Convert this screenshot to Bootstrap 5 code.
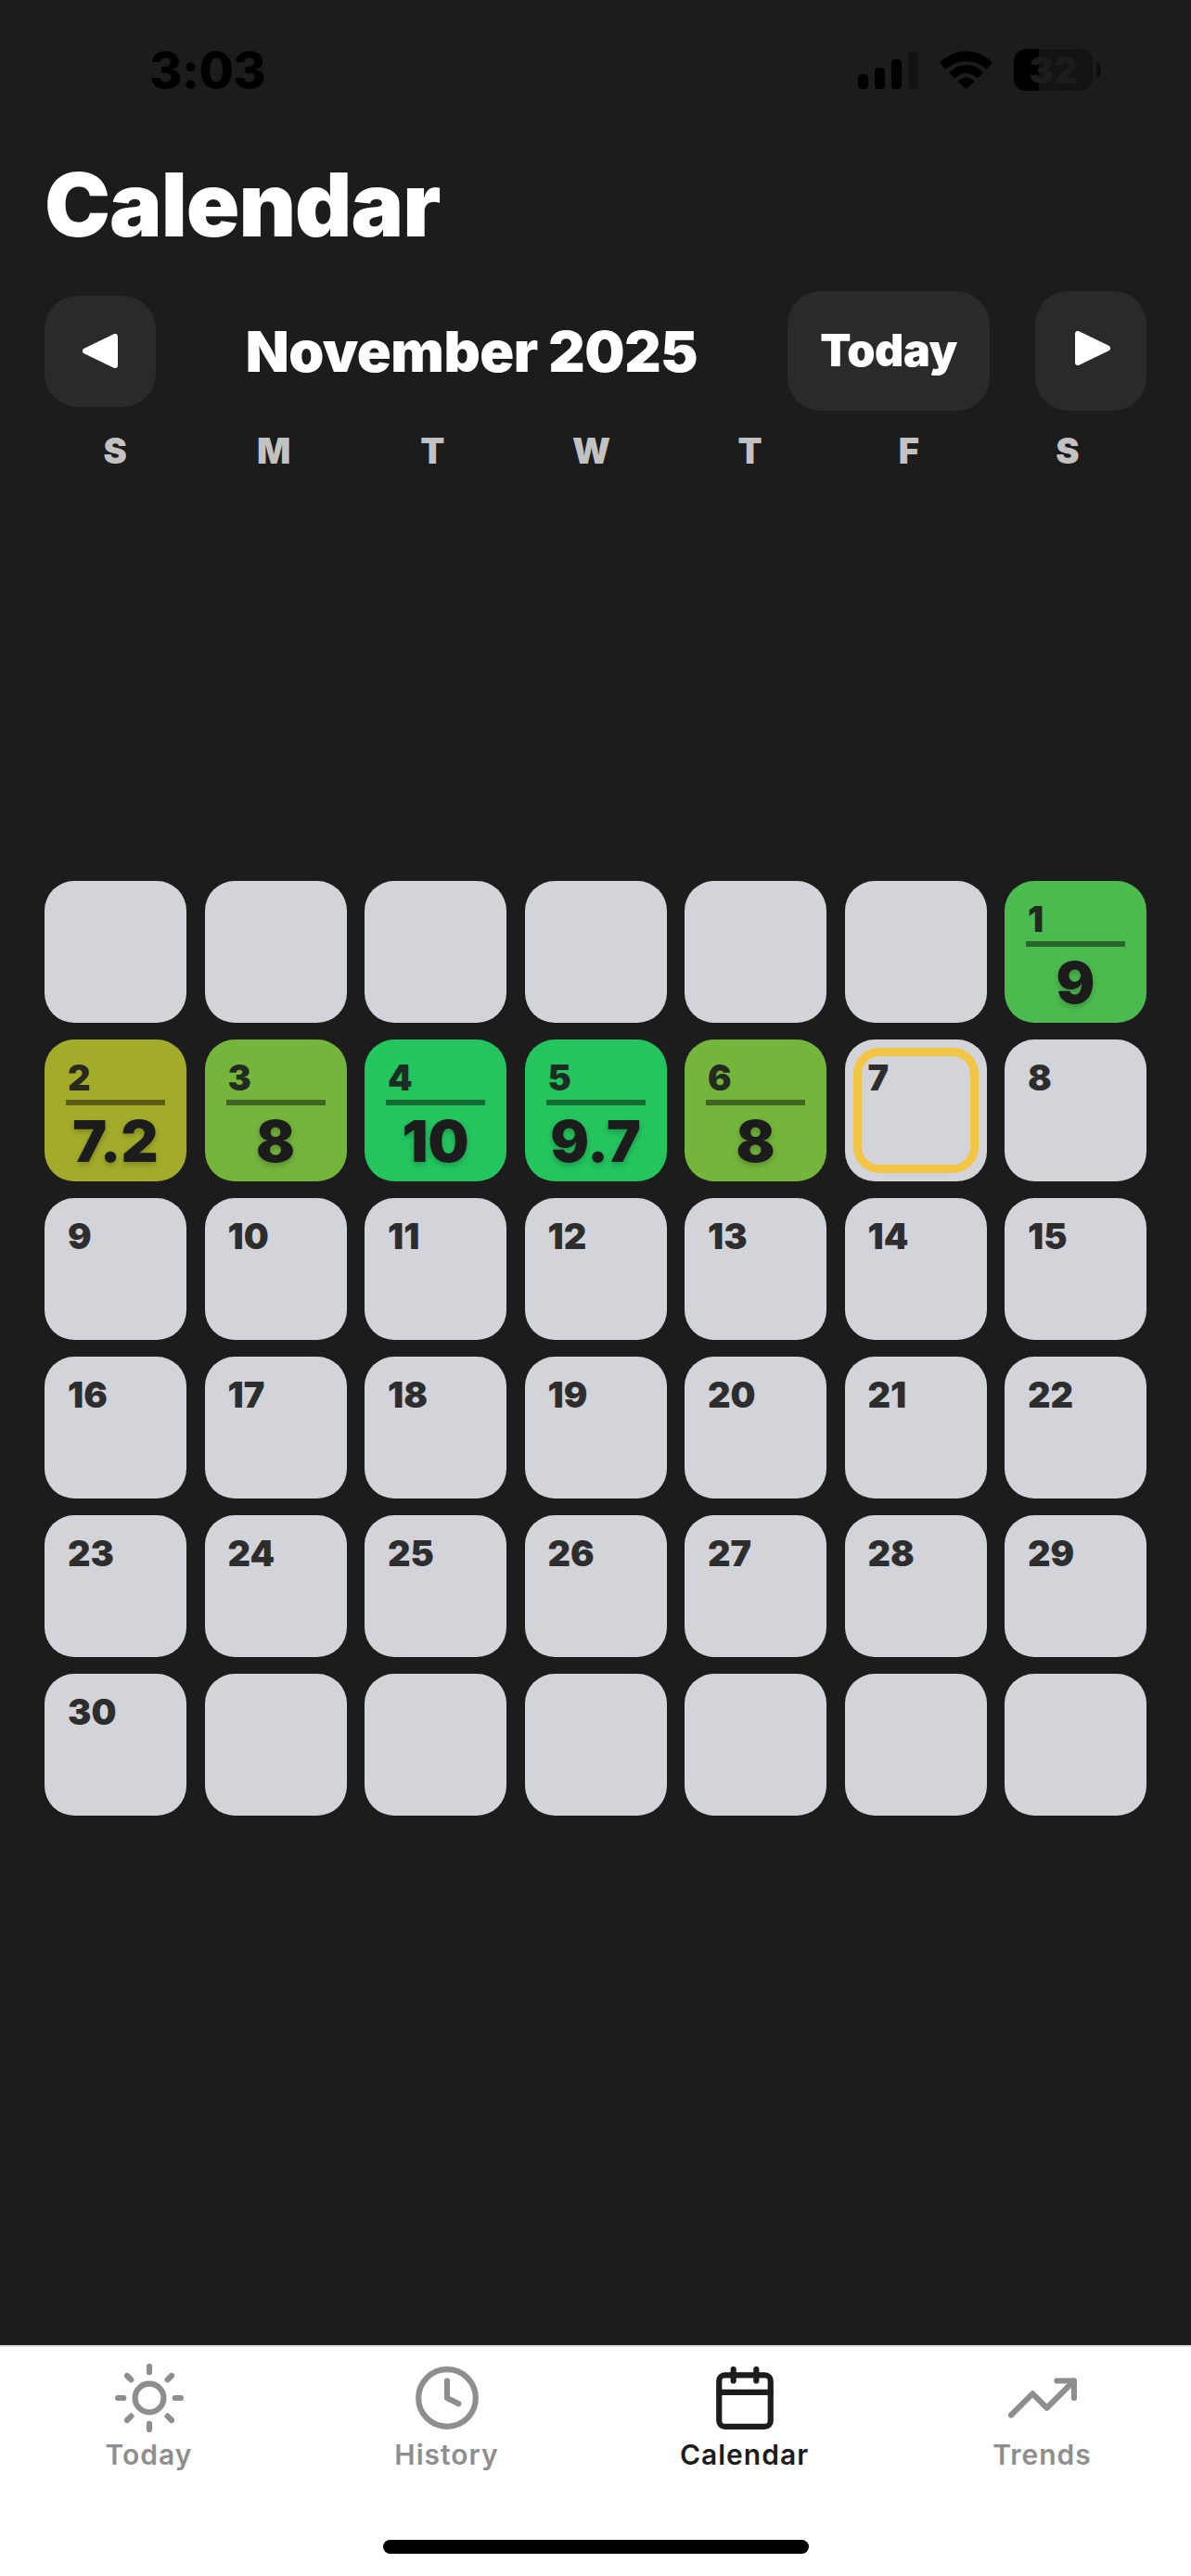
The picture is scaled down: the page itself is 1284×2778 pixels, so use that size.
<!DOCTYPE html>
<html lang="en">
<head>
<meta charset="utf-8">
<title>Calendar</title>
<link href="https://cdn.jsdelivr.net/npm/bootstrap@5.3.0/dist/css/bootstrap.min.css" rel="stylesheet">
<style>
html,body{height:100%}
body{background:#1c1c1c;font-family:"Inter","Liberation Sans",sans-serif;margin:0;width:1284px;height:2778px;overflow:hidden}
.app-shell{height:2778px}
.status-row{height:110px;padding:53px 97px 0 161px}
.clock-text{font-size:54px;font-weight:800;line-height:45px;color:#000;letter-spacing:-.5px}
.signal-icon{width:65px;height:41px;margin-top:2px}
.wifi-icon{width:57px;height:41px;margin-left:23px;margin-top:2px}
.battery-box{width:85px;height:45px;margin-left:23px;border-radius:13px;background:linear-gradient(90deg,#000 32%,#131313 32%);color:#1c1c1c;font-size:40px;font-weight:900;line-height:45px;text-align:center}
.battery-nub{width:5px;height:15px;background:#0e0e0e;border-radius:0 8px 8px 0;margin:15px 0 0 4px}
.page-title{font-size:95px;font-weight:900;line-height:110px;color:#fff;margin:56px 0 0 48px;letter-spacing:-1px}
.month-row{padding:0 48px;margin-top:38px;height:129px}
.arrow-btn{width:120px;background:#2a2a2a;border:0;border-radius:36px;padding:0}
.arrow-btn:hover,.arrow-btn:active{background:#2a2a2a}
.arrow-left{height:120px}
.arrow-right{height:129px;margin-left:49px}
.arrow-right svg{margin:0 0 6px 4px}
.today-btn{width:218px;height:129px;background:#2a2a2a;border:0;border-radius:36px;color:#fff;font-size:48.500px;font-weight:900;padding:0;letter-spacing:-.5px}
.today-btn:hover{background:#2a2a2a;color:#fff}
.month-name{font-size:61px;font-weight:900;color:#fff;line-height:70px;text-align:center;letter-spacing:-.5px}
.week-row{grid-template-columns:repeat(7,1fr);column-gap:19px;padding:0 57px 0 48px;margin-top:20px;color:#c2c2c2;font-size:38px;font-weight:900;line-height:46px;text-align:center}
.day-grid{grid-template-columns:repeat(7,1fr);grid-auto-rows:153px;gap:18px 19.500px;padding:0 48px;margin-top:441px}
.day-cell{background:#d2d4d9;border-radius:32px;padding:18px 23px 0;color:#1c1c1c}
.day-num{font-size:38px;font-weight:900;line-height:46px;padding-left:2px;opacity:.9}
.day-rule{height:6px;background:rgba(0,0,0,.45);margin-top:1px}
.day-score{font-size:62px;font-weight:900;line-height:70px;text-align:center;text-shadow:0 3px 6px rgba(0,0,0,.22);white-space:nowrap;margin:4px -10px 0}
.lvl-a{background:#4cbb4f}
.lvl-b{background:#a2ac2a}
.lvl-c{background:#74b53c}
.lvl-d{background:#24c55f}
.today-ring{inset:9px;border:9px solid #f3c544;border-radius:28px}
.tab-strip{height:249px;background:#fff;border-top:2px solid #dcdcdc;padding-top:18px;margin-top:auto}
.tab-link{color:#8e8e8e;font-size:30px;font-weight:600;line-height:36px;letter-spacing:1px;text-decoration:none}
.tab-link:hover{color:#8e8e8e}
.tab-link.is-on,.tab-link.is-on:hover{color:#1c1c1c}
.tab-icon{width:74px;height:74px;margin-bottom:6px;fill:none;stroke:currentColor;stroke-width:2;stroke-linecap:round;stroke-linejoin:round}
.home-bar{width:459px;height:15px;background:#000;border-radius:8px;margin:0 auto 24px}
</style>
</head>
<body>
<div class="app-shell d-flex flex-column">
  <div class="status-row d-flex align-items-start">
    <div class="clock-text">3:03</div>
    <svg class="signal-icon ms-auto" viewBox="0 0 65 41" aria-hidden="true">
      <rect x="0" y="25" width="11" height="16" rx="4" fill="#000"/>
      <rect x="18" y="18" width="11" height="23" rx="4" fill="#000"/>
      <rect x="36" y="9" width="11" height="32" rx="4" fill="#000"/>
      <rect x="54" y="0" width="11" height="41" rx="4" fill="#131313"/>
    </svg>
    <svg class="wifi-icon" viewBox="0 0 57 41" aria-hidden="true">
      <path fill="#000" d="M0 12.500C16-4 41-4 57 12.500L50.500 20C38 8 19 8 6.500 20Z"/>
      <path fill="#000" d="M10 23.500C20 12 37 12 47 23.500L41 29.500C33 22 24 22 16 29.500Z"/>
      <path fill="#000" d="M19.500 33C25 27 32 27 37.500 33L28.500 41Z"/>
    </svg>
    <div class="battery-box">32</div>
    <div class="battery-nub"></div>
  </div>

  <h1 class="page-title">Calendar</h1>

  <div class="month-row d-flex align-items-center">
    <button class="btn arrow-btn arrow-left d-flex align-items-center justify-content-center" type="button" aria-label="Previous month">
      <svg width="38" height="37" viewBox="0 0 38 37" aria-hidden="true"><path fill="#fff" stroke="#fff" stroke-width="6" stroke-linejoin="round" d="M3 18.500 35 3V34Z"/></svg>
    </button>
    <div class="month-name flex-grow-1">November 2025</div>
    <button class="btn today-btn" type="button">Today</button>
    <button class="btn arrow-btn arrow-right d-flex align-items-center justify-content-center" type="button" aria-label="Next month">
      <svg width="38" height="37" viewBox="0 0 38 37" aria-hidden="true"><path fill="#fff" stroke="#fff" stroke-width="6" stroke-linejoin="round" d="M35 18.500 3 3V34Z"/></svg>
    </button>
  </div>

  <div class="week-row d-grid">
    <div>S</div><div>M</div><div>T</div><div>W</div><div>T</div><div>F</div><div>S</div>
  </div>

  <div class="day-grid d-grid">
    <div class="day-cell"></div>
    <div class="day-cell"></div>
    <div class="day-cell"></div>
    <div class="day-cell"></div>
    <div class="day-cell"></div>
    <div class="day-cell"></div>
    <div class="day-cell lvl-a"><div class="day-num">1</div><div class="day-rule"></div><div class="day-score">9</div></div>

    <div class="day-cell lvl-b"><div class="day-num">2</div><div class="day-rule"></div><div class="day-score">7.2</div></div>
    <div class="day-cell lvl-c"><div class="day-num">3</div><div class="day-rule"></div><div class="day-score">8</div></div>
    <div class="day-cell lvl-d"><div class="day-num">4</div><div class="day-rule"></div><div class="day-score">10</div></div>
    <div class="day-cell lvl-d"><div class="day-num">5</div><div class="day-rule"></div><div class="day-score">9.7</div></div>
    <div class="day-cell lvl-c"><div class="day-num">6</div><div class="day-rule"></div><div class="day-score">8</div></div>
    <div class="day-cell position-relative"><div class="day-num">7</div><div class="today-ring position-absolute"></div></div>
    <div class="day-cell"><div class="day-num">8</div></div>

    <div class="day-cell"><div class="day-num">9</div></div>
    <div class="day-cell"><div class="day-num">10</div></div>
    <div class="day-cell"><div class="day-num">11</div></div>
    <div class="day-cell"><div class="day-num">12</div></div>
    <div class="day-cell"><div class="day-num">13</div></div>
    <div class="day-cell"><div class="day-num">14</div></div>
    <div class="day-cell"><div class="day-num">15</div></div>

    <div class="day-cell"><div class="day-num">16</div></div>
    <div class="day-cell"><div class="day-num">17</div></div>
    <div class="day-cell"><div class="day-num">18</div></div>
    <div class="day-cell"><div class="day-num">19</div></div>
    <div class="day-cell"><div class="day-num">20</div></div>
    <div class="day-cell"><div class="day-num">21</div></div>
    <div class="day-cell"><div class="day-num">22</div></div>

    <div class="day-cell"><div class="day-num">23</div></div>
    <div class="day-cell"><div class="day-num">24</div></div>
    <div class="day-cell"><div class="day-num">25</div></div>
    <div class="day-cell"><div class="day-num">26</div></div>
    <div class="day-cell"><div class="day-num">27</div></div>
    <div class="day-cell"><div class="day-num">28</div></div>
    <div class="day-cell"><div class="day-num">29</div></div>

    <div class="day-cell"><div class="day-num">30</div></div>
    <div class="day-cell"></div>
    <div class="day-cell"></div>
    <div class="day-cell"></div>
    <div class="day-cell"></div>
    <div class="day-cell"></div>
    <div class="day-cell"></div>
  </div>

  <nav class="tab-strip d-flex flex-column">
    <div class="row g-0">
      <a class="col-3 tab-link d-flex flex-column align-items-center" href="#">
        <svg class="tab-icon" viewBox="0 0 24 24" aria-hidden="true"><circle cx="12" cy="12" r="5"/><path d="M12 1v2M12 21v2M4.220 4.220l1.420 1.420M18.360 18.360l1.420 1.420M1 12h2M21 12h2M4.220 19.780l1.420-1.420M18.360 5.640l1.420-1.420"/></svg>
        <span>Today</span>
      </a>
      <a class="col-3 tab-link d-flex flex-column align-items-center" href="#">
        <svg class="tab-icon" viewBox="0 0 24 24" aria-hidden="true"><circle cx="12" cy="12" r="10"/><path d="M12 6v6l4 2"/></svg>
        <span>History</span>
      </a>
      <a class="col-3 tab-link is-on d-flex flex-column align-items-center" href="#">
        <svg class="tab-icon" viewBox="0 0 24 24" aria-hidden="true"><rect x="3" y="4" width="18" height="18" rx="2"/><path d="M16 2v4M8 2v4M3 10h18"/></svg>
        <span>Calendar</span>
      </a>
      <a class="col-3 tab-link d-flex flex-column align-items-center" href="#">
        <svg class="tab-icon" viewBox="0 0 24 24" aria-hidden="true"><path d="M23 6l-9.500 9.500-5-5L1 18"/><path d="M17 6h6v6"/></svg>
        <span>Trends</span>
      </a>
    </div>
    <div class="home-bar mt-auto"></div>
  </nav>
</div>
<script src="https://cdn.jsdelivr.net/npm/bootstrap@5.3.0/dist/js/bootstrap.bundle.min.js"></script>
</body>
</html>
